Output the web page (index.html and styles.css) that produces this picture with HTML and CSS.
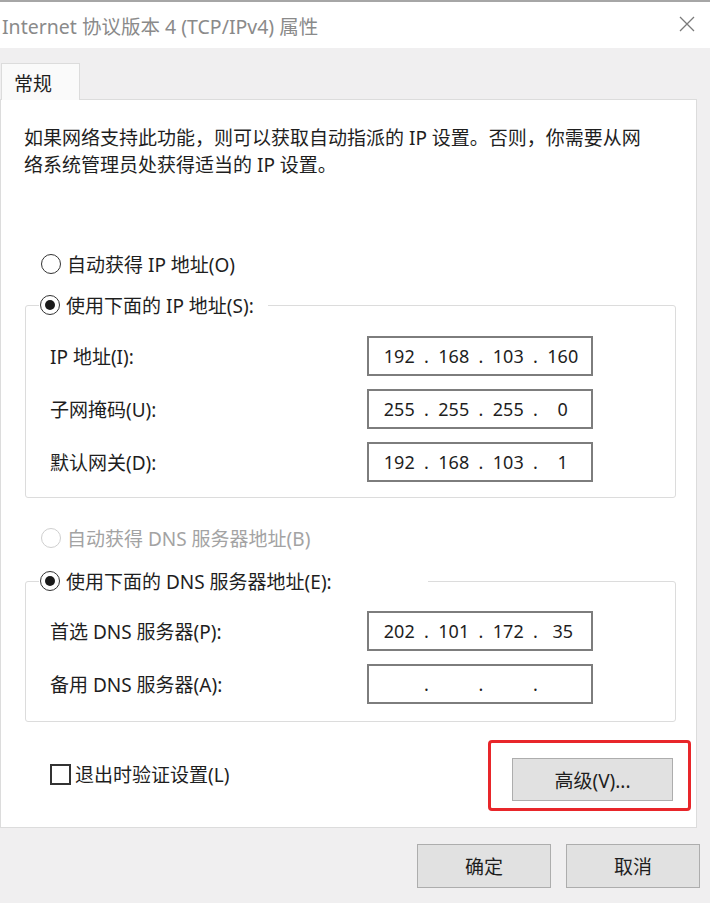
FILE: index.html
```html
<!DOCTYPE html>
<html lang="zh-CN">
<head>
  <meta charset="UTF-8">
  <meta name="viewport" content="width=device-width, initial-scale=1.0">
  <title>Internet 协议版本 4 (TCP/IPv4) 属性</title>
  <link rel="stylesheet" href="styles.css">
</head>
<body>
  <div class="titlebar">
    <span class="title">Internet 协议版本 4 (TCP/IPv4) 属性</span>
    <svg class="close" width="16" height="16" viewBox="0 0 16 16">
      <path d="M1 1 L15 15 M15 1 L1 15" stroke="#7a7a7a" stroke-width="1.3" fill="none"/>
    </svg>
  </div>

  <div class="dialog">
    <div class="tabs">
      <div class="tab">常规</div>
    </div>

    <div class="panel">
      <p class="intro">如果网络支持此功能，则可以获取自动指派的 IP 设置。否则，你需要从网<br>络系统管理员处获得适当的 IP 设置。</p>

      <div class="option first"><span class="radio"></span>自动获得 IP 地址(O)</div>

      <fieldset class="group">
        <legend class="option ip-legend"><span class="radio checked"></span>使用下面的 IP 地址(S):</legend>
        <div class="field">
          <span>IP 地址(I):</span>
          <div class="ip"><span>192</span><i>.</i><span>168</span><i>.</i><span>103</span><i>.</i><span>160</span></div>
        </div>
        <div class="field">
          <span>子网掩码(U):</span>
          <div class="ip"><span>255</span><i>.</i><span>255</span><i>.</i><span>255</span><i>.</i><span>0</span></div>
        </div>
        <div class="field">
          <span>默认网关(D):</span>
          <div class="ip"><span>192</span><i>.</i><span>168</span><i>.</i><span>103</span><i>.</i><span>1</span></div>
        </div>
      </fieldset>

      <div class="option disabled"><span class="radio"></span>自动获得 DNS 服务器地址(B)</div>

      <fieldset class="group dns">
        <legend class="option dns-legend"><span class="radio checked"></span>使用下面的 DNS 服务器地址(E):</legend>
        <div class="field">
          <span>首选 DNS 服务器(P):</span>
          <div class="ip"><span>202</span><i>.</i><span>101</span><i>.</i><span>172</span><i>.</i><span>35</span></div>
        </div>
        <div class="field">
          <span>备用 DNS 服务器(A):</span>
          <div class="ip"><span></span><i>.</i><span></span><i>.</i><span></span><i>.</i><span></span></div>
        </div>
      </fieldset>

      <div class="footer-row">
        <div class="check"><span class="box"></span>退出时验证设置(L)</div>
        <div class="highlight">
          <button class="btn advanced">高级(V)...</button>
        </div>
      </div>
    </div>

    <div class="actions">
      <button class="btn">确定</button>
      <button class="btn">取消</button>
    </div>
  </div>
</body>
</html>
```

FILE: styles.css
```css
body {
  margin: 0;
  padding: 0;
  width: 710px;
  height: 903px;
  overflow: hidden;
  background: #f0eff0;
  font-family: "Noto Sans", "Noto Sans CJK SC", sans-serif;
  font-size: 19px;
  color: #1e1e1e;
}
.titlebar {
  height: 46px;
  border-top: 2px solid #a6a6a6;
  background: #fff;
  display: flex;
  align-items: center;
  justify-content: space-between;
  padding: 0 15px 0 2px;
}
.title {
  color: #8a8a8a;
  font-size: 19.5px;
}
.close {
  margin-top: -2px;
}
.dialog {
  padding-top: 15px;
}
.tabs {
  display: flex;
  padding-left: 1px;
}
.tab {
  width: 79px;
  height: 37px;
  box-sizing: border-box;
  padding: 5px 0 0 12px;
  background: #fafafa;
  border: 1px solid #dcdcdc;
  border-bottom: none;
  margin-bottom: -1px;
  position: relative;
  z-index: 1;
}
.panel {
  width: 697px;
  box-sizing: border-box;
  background: #fff;
  border: 1px solid #dcdcdc;
  padding: 25px 5px 16px 23px;
}
.intro {
  margin: 0;
  line-height: 27px;
  white-space: nowrap;
}
.option {
  display: flex;
  align-items: center;
  gap: 6px;
  height: 30px;
}
.option.first {
  margin: 70px 0 0 17px;
}
.option.disabled {
  margin: 25px 0 0 17px;
  color: #a3a3a3;
}
.radio {
  width: 20px;
  height: 20px;
  flex: none;
  box-sizing: border-box;
  border: 1.5px solid #333;
  border-radius: 50%;
  display: flex;
  align-items: center;
  justify-content: center;
}
.disabled .radio {
  border-color: #cfcfcf;
}
.radio.checked::after {
  content: "";
  width: 10px;
  height: 10px;
  border-radius: 50%;
  background: #1a1a1a;
}
.group {
  margin: 11px 0 0 1px;
  width: 651px;
  box-sizing: border-box;
  border: 1px solid #dcdcdc;
  border-radius: 3px;
  padding: 16px 0 15px 24px;
  display: flex;
  flex-direction: column;
  gap: 13px;
}
.group legend {
  margin-left: -11px;
  padding: 0 2px 0 1px;
}
.ip-legend {
  width: 226px;
}
.dns-legend {
  width: 386px;
}
.group.dns {
  margin-top: 13px;
  padding-top: 15px;
  padding-bottom: 17px;
}
.field {
  display: grid;
  grid-template-columns: 317px 226px;
  align-items: center;
}
.ip {
  display: flex;
  align-items: center;
  height: 40px;
  box-sizing: border-box;
  border: 2px solid #7d7d7d;
  padding-left: 8px;
  font-size: 18px;
}
.ip span {
  width: 44.5px;
  text-align: center;
}
.ip i {
  font-style: normal;
  width: 10px;
  text-align: center;
}
.footer-row {
  display: flex;
  justify-content: space-between;
  align-items: flex-start;
  margin-top: 18px;
}
.check {
  display: flex;
  align-items: center;
  gap: 4px;
  margin: 20px 0 0 26px;
}
.box {
  width: 21px;
  height: 21px;
  box-sizing: border-box;
  border: 2px solid #333;
}
.highlight {
  border: 3px solid #e8262a;
  border-radius: 4px;
  padding: 15px 15px 7px 21px;
}
.btn {
  font-family: inherit;
  font-size: 19px;
  color: #1e1e1e;
  background: #e1e1e1;
  border: 1px solid #adadad;
  padding: 0;
}
.advanced {
  width: 161px;
  height: 43px;
  display: block;
}
.actions {
  display: flex;
  justify-content: flex-end;
  gap: 15px;
  padding-right: 10px;
  margin-top: 16px;
}
.actions .btn {
  width: 134px;
  height: 44px;
}
```
